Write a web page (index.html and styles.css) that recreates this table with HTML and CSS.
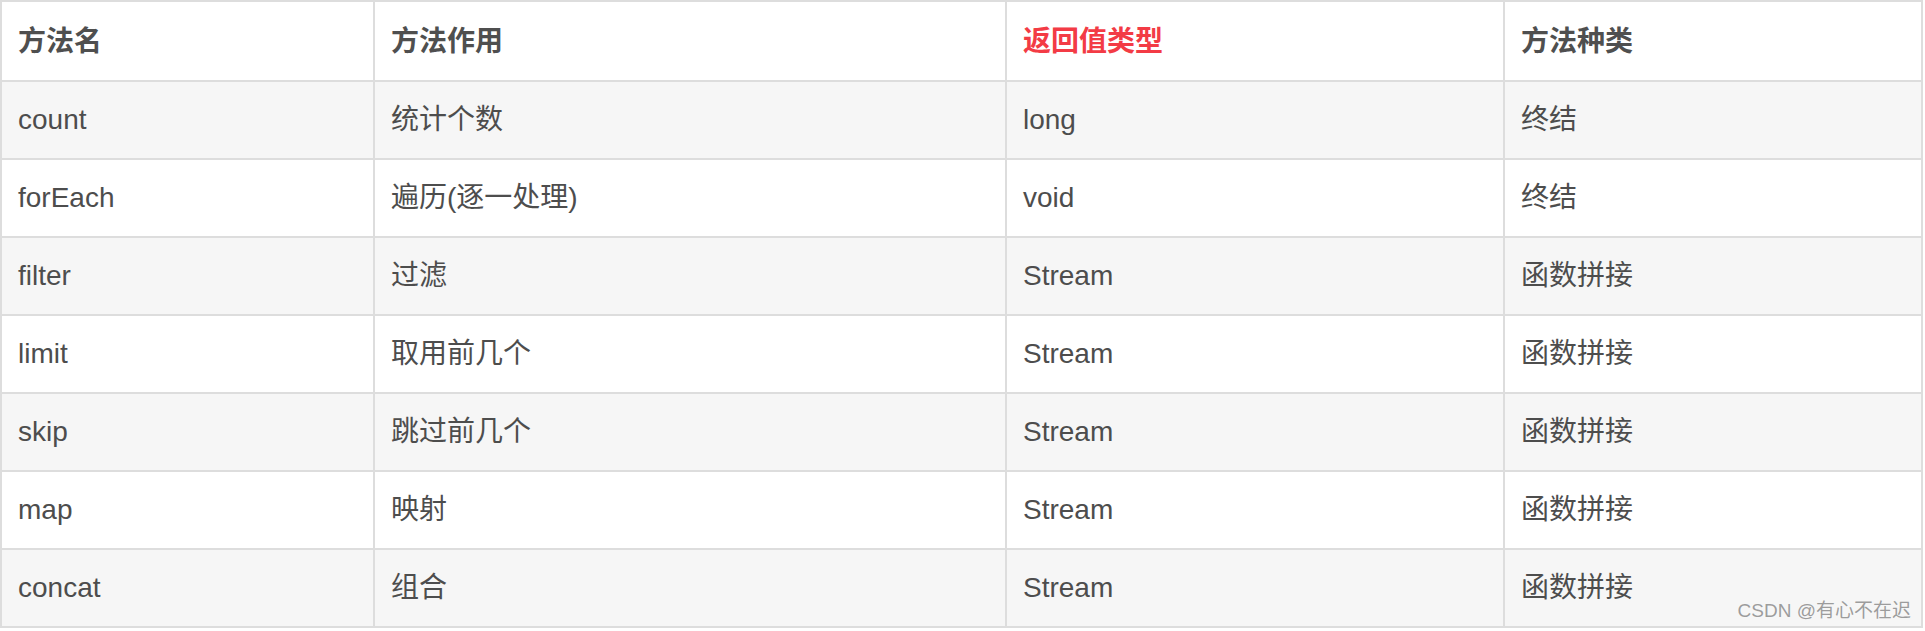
FILE: index.html
```html
<!DOCTYPE html>
<html lang="zh-CN">
<head>
<meta charset="utf-8">
<link rel="stylesheet" href="styles.css">
</head>
<body>
<div class="wrap">
<table class="tbl">
  <colgroup>
    <col class="c1"><col class="c2"><col class="c3"><col class="c4">
  </colgroup>
  <thead>
    <tr><th>方法名</th><th>方法作用</th><th class="red">返回值类型</th><th>方法种类</th></tr>
  </thead>
  <tbody>
    <tr><td>count</td><td>统计个数</td><td>long</td><td>终结</td></tr>
    <tr><td>forEach</td><td>遍历(逐一处理)</td><td>void</td><td>终结</td></tr>
    <tr><td>filter</td><td>过滤</td><td>Stream</td><td>函数拼接</td></tr>
    <tr><td>limit</td><td>取用前几个</td><td>Stream</td><td>函数拼接</td></tr>
    <tr><td>skip</td><td>跳过前几个</td><td>Stream</td><td>函数拼接</td></tr>
    <tr><td>map</td><td>映射</td><td>Stream</td><td>函数拼接</td></tr>
    <tr><td>concat</td><td>组合</td><td>Stream</td><td>函数拼接</td></tr>
  </tbody>
</table>
<div class="mark">CSDN @有心不在迟</div>
</div>
</body>
</html>
```

FILE: styles.css
```css
html, body {
  margin: 0;
  padding: 0;
  background: #fff;
}
.wrap {
  position: relative;
  width: 1925px;
  height: 631px;
  font-family: "Liberation Sans", "Noto Sans CJK SC", sans-serif;
}
.tbl {
  border-collapse: collapse;
  table-layout: fixed;
  width: 1921px;
  color: #4d4d4d;
  font-size: 28px;
  line-height: 44px;
}
.c1 { width: 373px; }
.c2 { width: 632px; }
.c3 { width: 498px; }
.c4 { width: 418px; }
.tbl th, .tbl td {
  border: 2px solid #dddddd;
  padding: 16px 16px;
  text-align: left;
  white-space: nowrap;
}
.tbl th {
  padding-top: 18px;
  padding-bottom: 16px;
  font-weight: bold;
  color: #4f4f4f;
  background: #fff;
}
.tbl th.red {
  color: #f33b45;
}
.tbl tbody tr:nth-child(odd) td {
  background: #f6f6f6;
}
.tbl tbody tr:nth-child(even) td {
  background: #fff;
}
.mark {
  position: absolute;
  right: 14px;
  bottom: 9px;
  font-size: 19px;
  line-height: 22px;
  color: rgba(140, 140, 140, 0.85);
  font-family: "Liberation Sans", "Noto Sans CJK SC", sans-serif;
}
```
